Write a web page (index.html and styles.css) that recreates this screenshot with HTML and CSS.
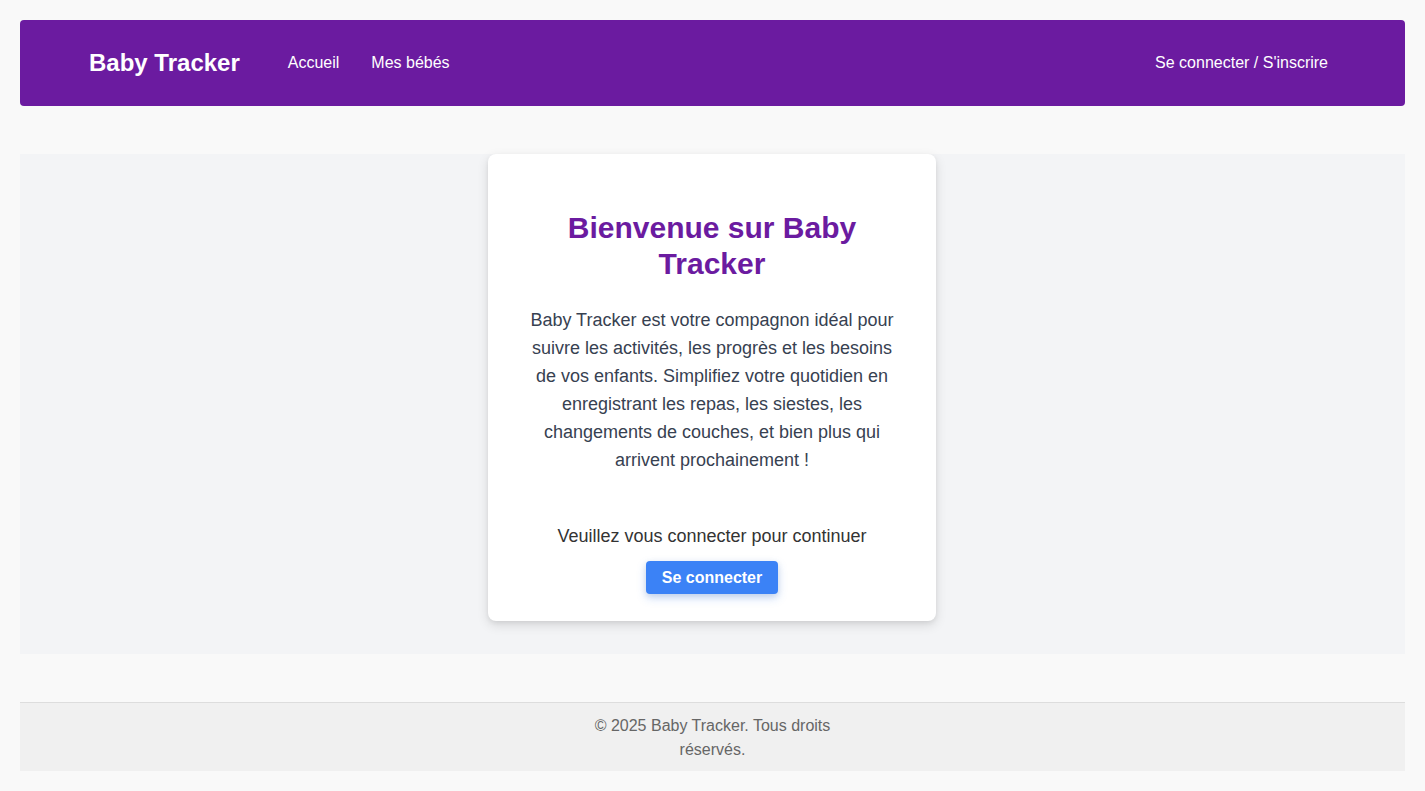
FILE: index.html
```html
<!DOCTYPE html>
<html lang="fr">
<head>
<meta charset="utf-8">
<title>Baby Tracker</title>
<link rel="stylesheet" href="styles.css">
</head>
<body>
<header class="navbar">
  <div class="nav-left">
    <a class="brand" href="#">Baby Tracker</a>
    <nav class="nav-links">
      <a href="#">Accueil</a>
      <a href="#">Mes bébés</a>
    </nav>
  </div>
  <a class="nav-auth" href="#">Se connecter / S'inscrire</a>
</header>

<main class="main">
  <section class="card">
    <h1 class="title">Bienvenue sur Baby Tracker</h1>
    <p class="intro">Baby Tracker est votre compagnon idéal pour suivre les activités, les progrès et les besoins de vos enfants. Simplifiez votre quotidien en enregistrant les repas, les siestes, les changements de couches, et bien plus qui arrivent prochainement !</p>
    <p class="prompt">Veuillez vous connecter pour continuer</p>
    <a class="btn" href="#">Se connecter</a>
  </section>
</main>

<footer class="footer">
  <p>© 2025 Baby Tracker. Tous droits réservés.</p>
</footer>
</body>
</html>
```

FILE: styles.css
```css
* { box-sizing: border-box; }

html, body { margin: 0; padding: 0; }

body {
  background: #f9f9f9;
  padding: 20px;
  font-family: "Liberation Sans", Arial, sans-serif;
  color: #333;
}

a { text-decoration: none; }

.navbar {
  height: 86px;
  background: #6b1ba0;
  border-radius: 4px;
  display: flex;
  align-items: center;
  justify-content: space-between;
  padding: 0 77px 0 69px;
}

.nav-left {
  display: flex;
  align-items: center;
  gap: 48px;
}

.brand {
  color: #fff;
  font-size: 24px;
  font-weight: bold;
}

.nav-links {
  display: flex;
  gap: 32px;
}

.nav-links a,
.nav-auth {
  color: #fff;
  font-size: 16px;
}

.main {
  margin-top: 48px;
  background: #f3f4f6;
  display: flex;
  justify-content: center;
  align-items: flex-start;
  padding-bottom: 33px;
}

.card {
  width: 448px;
  margin-left: -1px;
  background: #fff;
  border-radius: 8px;
  box-shadow: 0 4px 12px rgba(0, 0, 0, 0.12), 0 2px 4px rgba(0, 0, 0, 0.06);
  padding: 56px 40px 27px;
  text-align: center;
  display: flex;
  flex-direction: column;
  align-items: center;
}

.title {
  margin: 0 0 24px;
  color: #6b1ba0;
  font-size: 30px;
  line-height: 36px;
  font-weight: bold;
}

.intro {
  margin: 0;
  font-size: 18px;
  line-height: 28px;
  color: #374151;
}

.prompt {
  margin: 48px 0 11px;
  font-size: 18px;
  line-height: 28px;
  color: #333;
}

.btn {
  display: inline-block;
  background: #3b82f6;
  color: #fff;
  font-weight: bold;
  font-size: 16px;
  line-height: 18px;
  padding: 8px 16px 7px;
  border-radius: 4px;
  box-shadow: 0 4px 10px rgba(59, 130, 246, 0.25), 0 2px 6px rgba(0, 0, 0, 0.1);
}

.footer {
  margin-top: 48px;
  background: #f0f0f0;
  border-top: 1px solid #dddddd;
  padding: 11px 0 9px;
  text-align: center;
}

.footer p {
  margin: 0 auto;
  max-width: 250px;
  font-size: 16px;
  line-height: 24px;
  color: #666;
}
```
